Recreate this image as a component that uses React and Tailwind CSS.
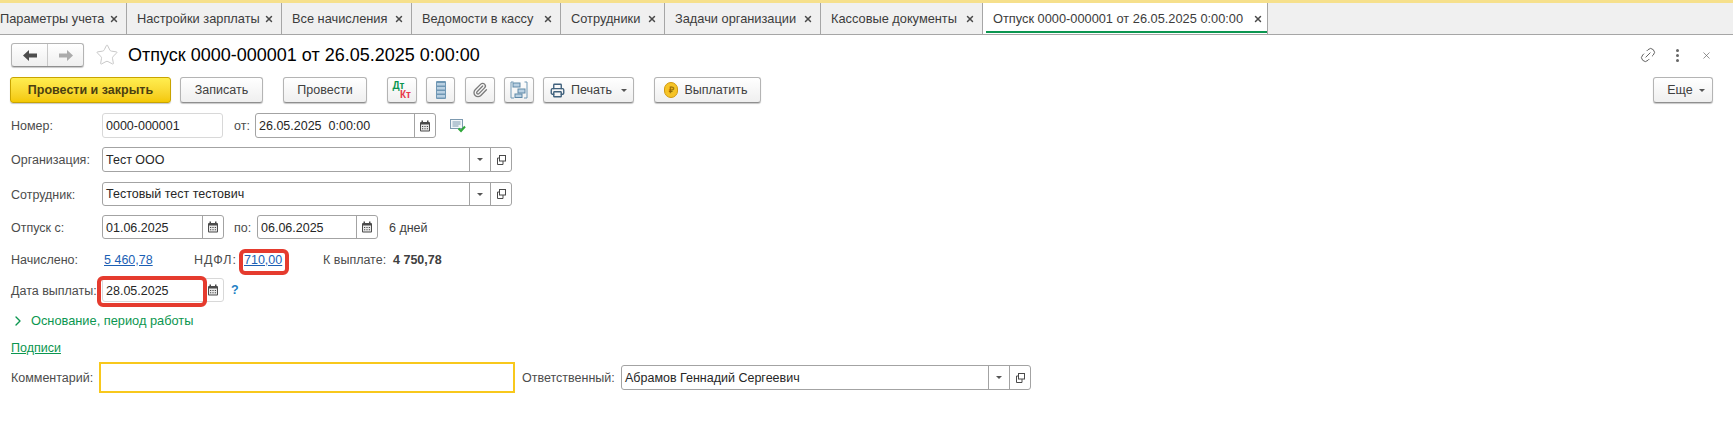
import React from 'react';
import { Star, Link2, X, ChevronRight, Printer, Paperclip } from 'lucide-react';

const tabs = [
  { label: 'Параметры учета', w: 'w-[127px]', pad: 'pl-0' },
  { label: 'Настройки зарплаты', w: 'w-[155px]', pad: 'pl-[10px]' },
  { label: 'Все начисления', w: 'w-[130px]', pad: 'pl-[10px]' },
  { label: 'Ведомости в кассу', w: 'w-[149px]', pad: 'pl-[10px]' },
  { label: 'Сотрудники', w: 'w-[104px]', pad: 'pl-[10px]' },
  { label: 'Задачи организации', w: 'w-[156px]', pad: 'pl-[10px]' },
  { label: 'Кассовые документы', w: 'w-[162px]', pad: 'pl-[10px]' },
];

const btn = 'h-[26px] flex items-center justify-center rounded-[3px] border border-[#b4b4b4] border-b-[#8f8f8f] bg-gradient-to-b from-white to-[#efefef] shadow-[0_1px_1px_#c8c8c8] text-[#404040] shrink-0';

function CloseMark() {
  return <X className="w-[10px] h-[10px] text-[#4a4a4a] shrink-0" strokeWidth={3.5} />;
}

function Caret() {
  return <span className="block w-0 h-0 border-x-[3px] border-x-transparent border-t-[3px] border-t-[#555] shrink-0" />;
}

function CalendarIcon() {
  return (
    <svg width="12" height="12" viewBox="0 0 12 12" className="shrink-0">
      <rect x="1" y="2" width="10" height="9.5" rx="1" fill="#4a4a4a" />
      <rect x="2.5" y="0.5" width="1.5" height="2.5" fill="#4a4a4a" />
      <rect x="8" y="0.5" width="1.5" height="2.5" fill="#4a4a4a" />
      <rect x="2" y="4.5" width="8" height="6" fill="#e8e8e8" />
      <path d="M3 6h1.2v1H3zM5.4 6h1.2v1H5.4zM7.8 6H9v1H7.8zM3 8.3h1.2v1H3zM5.4 8.3h1.2v1H5.4zM7.8 8.3H9v1H7.8z" fill="#4a4a4a" />
    </svg>
  );
}

function OpenIcon() {
  return (
    <svg width="9" height="10" viewBox="0 0 9 10" fill="none" stroke="#4a4a4a" className="shrink-0">
      <rect x="2.5" y="0.5" width="6" height="5.5" />
      <path d="M2.5 3H0.5V9.5H6V6" />
    </svg>
  );
}

function NavArrow({ color, flip = false }) {
  return (
    <svg width="14" height="11" viewBox="0 0 14 11" className={flip ? 'rotate-180' : ''}>
      <path d="M0 5.5L6 0v3.5h8v4H6V11z" fill={color} />
    </svg>
  );
}

function Label({ w, children, className = '' }) {
  return <span className={`${w} shrink-0 pt-[2px] text-[#4c4c4c] whitespace-nowrap ${className}`}>{children}</span>;
}

function DateField({ value, w }) {
  return (
    <div className={`${w} h-full flex shrink-0 rounded-[3px] border border-[#a3a3a3] bg-white`}>
      <span className="flex-1 pl-[3px] leading-[24px] text-[#262626] whitespace-pre">{value}</span>
      <span className="w-[21px] border-l border-[#a3a3a3] flex items-center justify-center">
        <CalendarIcon />
      </span>
    </div>
  );
}

function SelectField({ value, w, leading = 'leading-[24px]' }) {
  return (
    <div className={`${w} h-full flex shrink-0 rounded-[3px] border border-[#a3a3a3] bg-white`}>
      <span className={`flex-1 pl-[3px] ${leading} text-[#262626]`}>{value}</span>
      <span className="w-[21px] border-l border-[#a3a3a3] flex items-center justify-center"><Caret /></span>
      <span className="w-[21px] border-l border-[#a3a3a3] flex items-center justify-center"><OpenIcon /></span>
    </div>
  );
}

export default function App() {
  return (
    <div className="w-[1733px] h-[440px] bg-white overflow-hidden text-[12.5px] font-['Liberation_Sans',Arial,sans-serif]">
      {/* Tabs */}
      <div className="h-[35px] border-t-[3px] border-t-[#f6e08c] border-b border-b-[#a6a6a6] bg-[#f0f0f0] flex items-stretch text-[12.8px]">
        {tabs.map(t => (
          <div key={t.label} className={`${t.w} ${t.pad} pr-[7px] flex items-center justify-between border-r border-[#a6a6a6] text-[#3c3c3c] whitespace-nowrap`}>
            <span>{t.label}</span>
            <CloseMark />
          </div>
        ))}
        <div className="w-[285px] bg-white pl-[10px] pr-[4px] border-r border-[#a6a6a6] flex items-center justify-between text-[#3c3c3c] whitespace-nowrap relative">
          <span>Отпуск 0000-000001 от 26.05.2025 0:00:00</span>
          <CloseMark />
          <span className="absolute left-[3px] right-0 bottom-[1px] h-[2px] bg-[#0b9650]" />
        </div>
      </div>

      {/* Header */}
      <div className="mt-[8px] h-[24px] flex items-center pl-[11px] pr-[21px]">
        <div className="w-[73px] h-[24px] flex rounded-[3px] border border-[#b4b4b4] border-b-[#8f8f8f] bg-gradient-to-b from-white to-[#efefef] shadow-[0_1px_1px_#c8c8c8]">
          <span className="w-[36px] border-r border-[#c8c8c8] flex items-center justify-center">
            <NavArrow color="#4d4d4d" />
          </span>
          <span className="flex-1 flex items-center justify-center">
            <NavArrow color="#ababab" flip />
          </span>
        </div>
        <Star className="ml-[11px] w-[24px] h-[24px] text-[#c9c9c9]" strokeWidth={1} />
        <h1 className="ml-[9px] text-[18px] text-black whitespace-nowrap">Отпуск 0000-000001 от 26.05.2025 0:00:00</h1>
        <div className="ml-auto flex items-center">
          <Link2 className="w-[18px] h-[18px] text-[#5c5c5c] -rotate-45" strokeWidth={1.2} />
          <span className="ml-[19px] flex flex-col gap-[2px]">
            <span className="w-[3px] h-[3px] rounded-full bg-[#666]" />
            <span className="w-[3px] h-[3px] rounded-full bg-[#666]" />
            <span className="w-[3px] h-[3px] rounded-full bg-[#666]" />
          </span>
          <X className="ml-[22px] w-[11px] h-[11px] text-[#666]" strokeWidth={1.5} />
        </div>
      </div>

      {/* Toolbar */}
      <div className="mt-[10px] h-[26px] flex items-center pl-[10px] pr-[20px]">
        <button className="w-[161px] h-[26px] rounded-[3px] border border-[#c9a400] bg-gradient-to-b from-[#ffee4f] to-[#f4c800] shadow-[0_1px_1px_#c8c8c8] font-bold text-[#4b3f10] shrink-0">Провести и закрыть</button>
        <button className={`${btn} w-[83px] ml-[9px]`}>Записать</button>
        <button className={`${btn} w-[84px] ml-[20px]`}>Провести</button>
        <button className={`${btn} w-[30px] ml-[20px] flex-col`}>
          <span className="text-[10px] leading-[8px] font-bold text-[#0b9650] -ml-[7px]">Дт</span>
          <span className="text-[10px] leading-[9px] font-bold text-[#e8394a] ml-[7px]">Кт</span>
        </button>
        <button className={`${btn} w-[29px] ml-[9px]`}>
          <svg width="10" height="18" viewBox="0 0 10 18">
            <rect width="10" height="18" rx="1" fill="#6f97b4" />
            <path d="M1 2h8v2.5H1zM1 6h8v2.5H1zM1 10h8v2.5H1zM1 14h8v2.5H1z" fill="#b9d0e2" />
          </svg>
        </button>
        <button className={`${btn} w-[30px] ml-[10px]`}>
          <Paperclip className="w-[16px] h-[16px] text-[#7b7b7b]" strokeWidth={2} />
        </button>
        <button className={`${btn} w-[30px] ml-[9px]`}>
          <svg width="18" height="18" viewBox="0 0 18 18" fill="none">
            <path d="M3.5 1H1v16h3M14.5 1H17v16h-3" stroke="#6f97b4" />
            <rect x="3" y="2" width="7" height="4" fill="#b9d0e2" stroke="#5f89a8" />
            <rect x="8" y="8" width="7" height="4" fill="#b9d0e2" stroke="#5f89a8" />
            <rect x="5" y="13" width="7" height="3.5" fill="#b9d0e2" stroke="#5f89a8" />
          </svg>
        </button>
        <button className={`${btn} w-[91px] ml-[9px] gap-[6px]`}>
          <Printer className="w-[15px] h-[15px] text-[#3f607c]" strokeWidth={2.2} />
          <span>Печать</span>
          <span className="ml-[3px] flex"><Caret /></span>
        </button>
        <button className={`${btn} w-[107px] ml-[20px] gap-[6px] pr-[3px]`}>
          <span className="w-[14px] h-[16px] rounded-full bg-[#f6c427] border border-[#d19a10] flex items-center justify-center text-[9px] font-bold text-[#9a6a00] leading-none">₽</span>
          <span>Выплатить</span>
        </button>
        <button className={`${btn} w-[60px] ml-auto gap-[6px] pl-[6px]`}>
          <span>Еще</span>
          <Caret />
        </button>
      </div>

      {/* Form */}
      <div className="pl-[11px] relative">
        <div className="mt-[10px] h-[25px] flex items-center">
          <Label w="w-[91px]">Номер:</Label>
          <div className="w-[121px] h-full rounded-[3px] border border-[#d8d8d8] pl-[3px] leading-[24px] text-[#262626] shrink-0">0000-000001</div>
          <Label w="w-[21px]" className="ml-[11px]">от:</Label>
          <DateField value="26.05.2025  0:00:00" w="w-[181px]" />
          <svg width="16" height="15" viewBox="0 0 16 15" className="ml-[14px] shrink-0">
            <rect x="0.5" y="1.5" width="12" height="9" fill="#f2f6f9" stroke="#7d9ab0" />
            <path d="M2.5 4h8M2.5 6h8M2.5 8h6" stroke="#7d9ab0" />
            <path d="M8.5 10.5l2.5 2.5 4-4.5" stroke="#2fa83a" strokeWidth="2" fill="none" />
          </svg>
        </div>

        <div className="mt-[9px] h-[25px] flex items-center">
          <Label w="w-[91px]">Организация:</Label>
          <SelectField value="Тест ООО" w="w-[410px]" />
        </div>

        <div className="mt-[10px] h-[24px] flex items-center">
          <Label w="w-[91px]" className="pt-0">Сотрудник:</Label>
          <SelectField value="Тестовый тест тестович" w="w-[410px]" leading="leading-[22px]" />
        </div>

        <div className="mt-[9px] h-[24px] flex items-center">
          <Label w="w-[91px]">Отпуск с:</Label>
          <DateField value="01.06.2025" w="w-[122px]" />
          <Label w="w-[23px]" className="ml-[10px]">по:</Label>
          <DateField value="06.06.2025" w="w-[121px]" />
          <span className="ml-[11px] pt-[2px] text-[#404040]">6 дней</span>
        </div>

        <div className="mt-[10px] h-[20px] flex items-center">
          <Label w="w-[93px]">Начислено:</Label>
          <a className="w-[90px] shrink-0 pt-[2px] text-[#1b5fb4] underline">5 460,78</a>
          <Label w="w-[50px]" className="tracking-[1px]">НДФЛ:</Label>
          <a className="w-[79px] shrink-0 pt-[2px] text-[#1b5fb4] underline">710,00</a>
          <Label w="w-[70px]">К выплате:</Label>
          <span className="pt-[2px] font-bold text-[#404040]">4 750,78</span>
        </div>

        <div className="mt-[9px] h-[24px] flex items-center">
          <Label w="w-[91px]">Дата выплаты:</Label>
          <div className="w-[122px] h-full flex shrink-0 rounded-[3px] border border-[#d8d8d8]">
            <span className="flex-1 pl-[3px] leading-[24px] text-[#262626]">28.05.2025</span>
            <span className="w-[21px] flex items-center justify-center"><CalendarIcon /></span>
          </div>
          <span className="ml-[7px] font-bold text-[#1f7fc4]">?</span>
        </div>

        <div className="mt-[10px] h-[18px] flex items-center text-[#0b9650]">
          <ChevronRight className="-ml-[1px] w-[16px] h-[16px]" strokeWidth={2} />
          <span className="ml-[5px] text-[12.8px]">Основание, период работы</span>
        </div>

        <div className="mt-[9px] h-[18px] flex items-center">
          <a className="text-[#0b9650] underline">Подписи</a>
        </div>

        <div className="mt-[5px] h-[31px] flex items-center">
          <Label w="w-[88px]" className="pt-0">Комментарий:</Label>
          <div className="w-[416px] h-full border-2 border-[#f8c81c] shrink-0" />
          <Label w="w-[99px]" className="ml-[7px] pt-0">Ответственный:</Label>
          <div className="h-[25px] flex">
            <SelectField value="Абрамов Геннадий Сергеевич" w="w-[410px]" />
          </div>
        </div>

        {/* red marks drawn over the screenshot */}
        <div className="absolute left-[239px] top-[136px] w-[50px] h-[26px] rounded-[6px] border-[4px] border-[#e53b2e]" />
        <div className="absolute left-[97px] top-[163px] w-[110px] h-[31px] rounded-[6px] border-[4px] border-[#e53b2e]" />
      </div>
    </div>
  );
}
